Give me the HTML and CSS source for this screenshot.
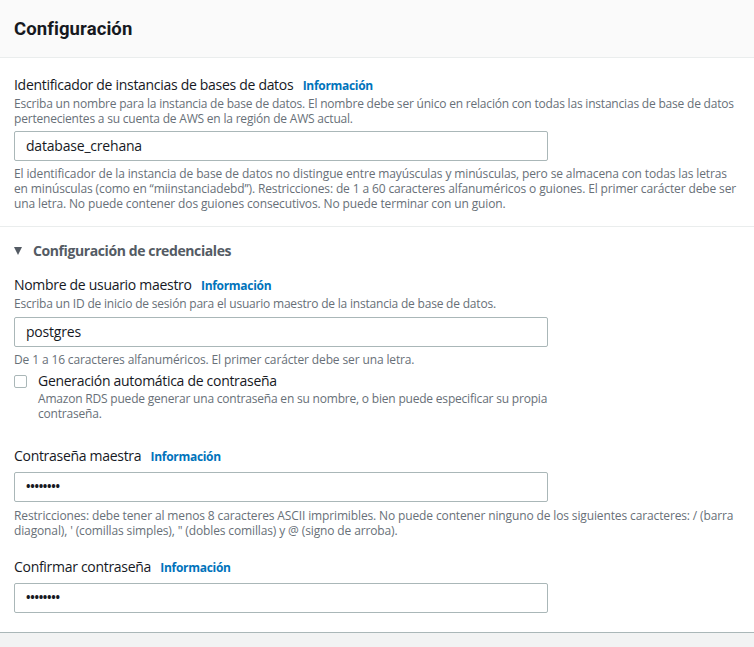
FILE: index.html
```html
<!DOCTYPE html>
<html lang="es">
<head>
<meta charset="utf-8">
<title>Configuración</title>
<link rel="stylesheet" href="styles.css">
</head>
<body>
<div class="panel">
  <div class="panel-header"><h2 class="title">Configuración</h2></div>
  <div class="panel-body">
    <div class="block first">
      <div class="label">Identificador de instancias de bases de datos <a class="info">Información</a></div>
      <div class="desc">Escriba un nombre para la instancia de base de datos. El nombre debe ser único en relación con todas las instancias de base de datos pertenecientes a su cuenta de AWS en la región de AWS actual.</div>
      <div class="input">database_crehana</div>
      <div class="help">El identificador de la instancia de base de datos no distingue entre mayúsculas y minúsculas, pero se almacena con todas las letras en minúsculas (como en “miinstanciadebd”). Restricciones: de 1 a 60 caracteres alfanuméricos o guiones. El primer carácter debe ser una letra. No puede contener dos guiones consecutivos. No puede terminar con un guion.</div>
    </div>
    <div class="section">
      <div class="section-title"><span class="caret"></span>Configuración de credenciales</div>
      <div class="field">
        <div class="label">Nombre de usuario maestro <a class="info">Información</a></div>
        <div class="desc">Escriba un ID de inicio de sesión para el usuario maestro de la instancia de base de datos.</div>
        <div class="input">postgres</div>
        <div class="help">De 1 a 16 caracteres alfanuméricos. El primer carácter debe ser una letra.</div>
        <div class="check-row">
          <span class="checkbox"></span>
          <div class="check-text">
            <div class="label">Generación automática de contraseña</div>
            <div class="desc">Amazon RDS puede generar una contraseña en su nombre, o bien puede especificar su propia contraseña.</div>
          </div>
        </div>
      </div>
      <div class="field pw">
        <div class="label">Contraseña maestra <a class="info">Información</a></div>
        <div class="input dots">••••••••</div>
        <div class="help">Restricciones: debe tener al menos 8 caracteres ASCII imprimibles. No puede contener ninguno de los siguientes caracteres: / (barra diagonal), ' (comillas simples), " (dobles comillas) y @ (signo de arroba).</div>
      </div>
      <div class="field confirm">
        <div class="label">Confirmar contraseña <a class="info">Información</a></div>
        <div class="input dots">••••••••</div>
      </div>
    </div>
  </div>
</div>
<div class="footer"></div>
</body>
</html>
```
FILE: styles.css
```css
html, body {
  margin: 0;
  padding: 0;
  background: #ffffff;
  font-family: "Open Sans", "Noto Sans", sans-serif;
  color: #16191f;
}
.panel {
  width: 754px;
}
.panel-header {
  height: 57px;
  background: #fafafa;
  border-bottom: 1px solid #eaeded;
  display: flex;
  align-items: center;
  padding: 0 14px;
}
.title {
  margin: 0;
  font-family: "Roboto", sans-serif;
  font-size: 18.5px;
  font-weight: 700;
  letter-spacing: 0.1px;
  color: #16191f;
}
.panel-body {
  padding: 0 14px;
}
.block.first {
  padding-top: 17px;
  padding-bottom: 15px;
  border-bottom: 1px solid #eaeded;
  margin: 0 -14px;
  padding-left: 14px;
  padding-right: 14px;
}
.block.first .input {
  margin-top: 5px;
}
.label {
  font-size: 14px;
  line-height: 20px;
  letter-spacing: -0.3px;
  color: #16191f;
}
.info {
  font-size: 12px;
  font-weight: 700;
  letter-spacing: -0.3px;
  color: #0073bb;
  margin-left: 6px;
}
.desc, .help {
  font-size: 12px;
  line-height: 15px;
  letter-spacing: -0.2px;
  color: #687078;
}
.help {
  letter-spacing: -0.13px;
  margin-top: 5px;
}
.input {
  box-sizing: border-box;
  width: 534px;
  height: 30px;
  border: 1px solid #aab7b8;
  border-radius: 2px;
  margin-top: 6px;
  padding: 0 11px;
  font-size: 14px;
  line-height: 28px;
  letter-spacing: -0.2px;
  color: #16191f;
}
.input.dots {
  font-size: 12px;
  letter-spacing: -0.3px;
  font-weight: 700;
}
.section {
  padding-top: 14px;
}
.section-title {
  display: flex;
  align-items: center;
  font-size: 14px;
  font-weight: 700;
  line-height: 20px;
  letter-spacing: -0.4px;
  color: #545b64;
}
.caret {
  width: 0;
  height: 0;
  border-left: 4.5px solid transparent;
  border-right: 4.5px solid transparent;
  border-top: 8px solid #545b64;
  margin-right: 11px;
}
.field {
  margin-top: 14px;
}
.check-row {
  display: flex;
  gap: 11px;
  margin-top: 4px;
}
.checkbox {
  box-sizing: border-box;
  width: 13px;
  height: 13px;
  border: 1px solid #aab7b8;
  border-radius: 2px;
  margin-top: 4px;
  flex-shrink: 0;
}
.check-text {
  width: 520px;
}
.field.pw {
  margin-top: 25px;
}
.field.pw .input,
.field.confirm .input {
  margin-top: 5px;
}
.field.pw .help {
  margin-top: 6px;
}
.field.confirm {
  margin-top: 19px;
  padding-bottom: 19px;
}
.footer {
  border-top: 1px solid #aab7b8;
  background: #f2f3f3;
  height: 14px;
}
```
